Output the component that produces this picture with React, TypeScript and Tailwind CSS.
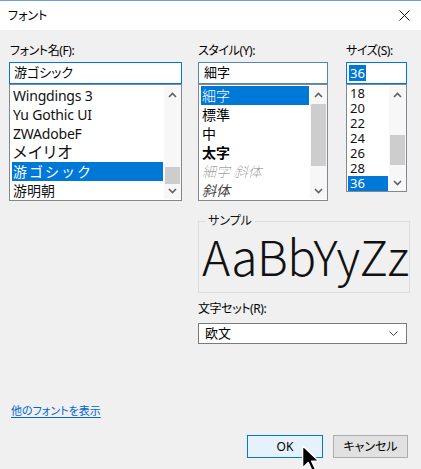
import React from "react";

const UI = "font-['Noto_Sans','Noto_Sans_CJK_JP',sans-serif] [font-feature-settings:'palt']";

function ScrollBar({ thumbTop, thumbH }: { thumbTop: number; thumbH: number }) {
  return (
    <div className="relative w-[17px] h-full bg-[#f7f7f7] flex flex-col justify-between">
      <div className="h-[17px] flex items-center justify-center">
        <svg width="9" height="6" viewBox="0 0 9 6">
          <path d="M1 5 L4.5 1.5 L8 5" fill="none" stroke="#606060" strokeWidth="1.6" />
        </svg>
      </div>
      <div
        className="absolute left-[1px] right-[1px] bg-[#cdcdcd]"
        style={{ top: thumbTop, height: thumbH }}
      />
      <div className="h-[17px] flex items-center justify-center">
        <svg width="9" height="6" viewBox="0 0 9 6">
          <path d="M1 1 L4.5 4.5 L8 1" fill="none" stroke="#606060" strokeWidth="1.6" />
        </svg>
      </div>
    </div>
  );
}

export default function App() {
  const fonts: { t: string; cls: string; sel?: boolean }[] = [
    { t: "Wingdings 3", cls: "text-[14px] tracking-[-0.2px]" },
    { t: "Yu Gothic UI", cls: "text-[14px] tracking-[-0.2px]" },
    { t: "ZWAdobeF", cls: "text-[14px] tracking-[-0.2px]" },
    { t: "メイリオ", cls: "text-[16px] tracking-[1px]" },
    { t: "游ゴシック", cls: "text-[14px] tracking-[2px] [font-feature-settings:normal]", sel: true },
    { t: "游明朝", cls: "text-[14px] [font-feature-settings:normal]" },
  ];
  const styles: { t: string; cls: string; sel?: boolean }[] = [
    { t: "細字", cls: "font-light", sel: true },
    { t: "標準", cls: "" },
    { t: "中", cls: "" },
    { t: "太字", cls: "font-bold" },
    { t: "細字 斜体", cls: "italic font-thin text-[#777]" },
    { t: "斜体", cls: "italic text-[#444]" },
  ];
  const sizes = ["18", "20", "22", "24", "26", "28", "36"];

  return (
    <div className={`${UI} relative w-[421px] h-[469px] overflow-hidden bg-[#f0f0f0] border-t border-[#6b9fd8] text-[#000]`}>
      {/* Title bar */}
      <div className="h-[29px] bg-white flex items-center justify-between pl-[8px] pr-[11px]">
        <span className="text-[12px]">フォント</span>
        <svg width="11" height="11" viewBox="0 0 11 11">
          <path d="M0.5 0.5 L10.5 10.5 M10.5 0.5 L0.5 10.5" stroke="#111" strokeWidth="1" />
        </svg>
      </div>

      <div className="pl-[9px] pt-[12px] flex flex-col">
        {/* three columns */}
        <div className="flex">
          {/* font name */}
          <div className="w-[173px] flex flex-col">
            <div className="h-[20px] text-[12px] leading-[18px] pl-[1px] tracking-[-0.4px]">フォント名(F):</div>
            <div className="h-[22px] bg-white border border-[#0078d7] flex items-center pl-[4px] text-[13px]">游ゴシック</div>
            <div className="h-[117px] bg-white border border-[#828790] flex pl-[2px] pt-[1px] pb-[1px]">
              <div className="flex-1 flex flex-col mr-[1px]">
                {fonts.map((f) => (
                  <div
                    key={f.t}
                    className={`h-[19px] leading-[19px] pl-[1px] whitespace-nowrap ${f.cls} ${f.sel ? "bg-[#0078d7] text-white" : "text-[#111]"}`}
                  >
                    {f.t}
                  </div>
                ))}
              </div>
              <ScrollBar thumbTop={81} thumbH={17} />
            </div>
          </div>

          {/* style */}
          <div className="w-[130px] ml-[16px] flex flex-col">
            <div className="h-[20px] text-[12px] leading-[18px] tracking-[-0.4px]">スタイル(Y):</div>
            <div className="h-[22px] bg-white border border-[#4f86bd] flex items-center pl-[5px] text-[13px] [font-feature-settings:normal]">細字</div>
            <div className="h-[117px] bg-white border border-[#828790] flex pl-[2px] pt-[1px] pb-[1px]">
              <div className="flex-1 flex flex-col mr-[1px]">
                {styles.map((s) => (
                  <div
                    key={s.t}
                    className={`h-[19px] leading-[19px] pl-[1px] text-[14px] whitespace-nowrap [font-feature-settings:normal] ${s.cls} ${s.sel ? "bg-[#0078d7] text-white" : ""}`}
                  >
                    {s.t}
                  </div>
                ))}
              </div>
              <ScrollBar thumbTop={18} thumbH={62} />
            </div>
          </div>

          {/* size */}
          <div className="w-[61px] ml-[18px] flex flex-col">
            <div className="h-[20px] text-[12px] leading-[18px] tracking-[-0.4px]">サイズ(S):</div>
            <div className="h-[22px] bg-white border border-[#0078d7] flex items-center pl-[2px] text-[13px]">
              <span className="bg-[#0078d7] text-white leading-[16px] px-[1px]">36</span>
            </div>
            <div className="h-[108px] bg-white border border-[#828790] flex pl-[1px] pt-[1px]">
              <div className="flex-1 flex flex-col mr-[1px]">
                {sizes.map((s) => (
                  <div
                    key={s}
                    className={`h-[15px] leading-[15px] pl-[2px] text-[13px] ${s === "36" ? "bg-[#0078d7] text-white" : "text-[#111]"}`}
                  >
                    {s}
                  </div>
                ))}
              </div>
              <ScrollBar thumbTop={49} thumbH={30} />
            </div>
          </div>
        </div>

        {/* sample + charset */}
        <div className="ml-[189px] w-[209px] flex flex-col">
          <fieldset className="mt-[13px] h-[79px] border border-[#dcdcdc] px-0 overflow-hidden">
            <legend className="ml-[6px] px-[3px] text-[12px] leading-[14px] text-[#111]">サンプル</legend>
            <div className="pl-[3px] whitespace-nowrap font-['Noto_Sans_CJK_JP',sans-serif] font-light text-[48px] leading-[54px] tracking-[-0.5px] text-[#111] [font-feature-settings:normal]">
              AaBbYyZz
            </div>
          </fieldset>
          <div className="mt-[7px] h-[18px] text-[12px] leading-[18px] tracking-[-0.4px]">文字セット(R):</div>
          <div className="mt-[5px] h-[21px] bg-white border border-[#7a7a7a] flex items-center justify-between pl-[6px] pr-[8px]">
            <span className="text-[13px] [font-feature-settings:normal]">欧文</span>
            <svg width="9" height="5" viewBox="0 0 9 5">
              <path d="M0.5 0.5 L4.5 4.5 L8.5 0.5" fill="none" stroke="#444" strokeWidth="1" />
            </svg>
          </div>
        </div>

        {/* link */}
        <div className="mt-[58px] ml-[2px] h-[18px] text-[11px] leading-[18px]">
          <span className="text-[#0066cc] underline underline-offset-2">他のフォントを表示</span>
        </div>

        {/* buttons */}
        <div className="mt-[15px] flex justify-end pr-[13px] gap-[10px]">
          <button className="w-[76px] h-[23px] bg-[#e5f1fb] border border-[#0078d7] text-[12px]">OK</button>
          <button className="w-[75px] h-[23px] bg-[#e1e1e1] border border-[#adadad] text-[12px]">キャンセル</button>
        </div>
      </div>

      {/* mouse cursor */}
      <svg className="absolute left-[301px] top-[444px]" width="20" height="28" viewBox="0 0 13 20">
        <path d="M0.5 0.5 L0.5 16.5 L4.5 12.5 L7.5 19 L10 18 L7 11.5 L12 11.5 Z" fill="#000" stroke="#fff" strokeWidth="1" strokeLinejoin="round" />
      </svg>
    </div>
  );
}
